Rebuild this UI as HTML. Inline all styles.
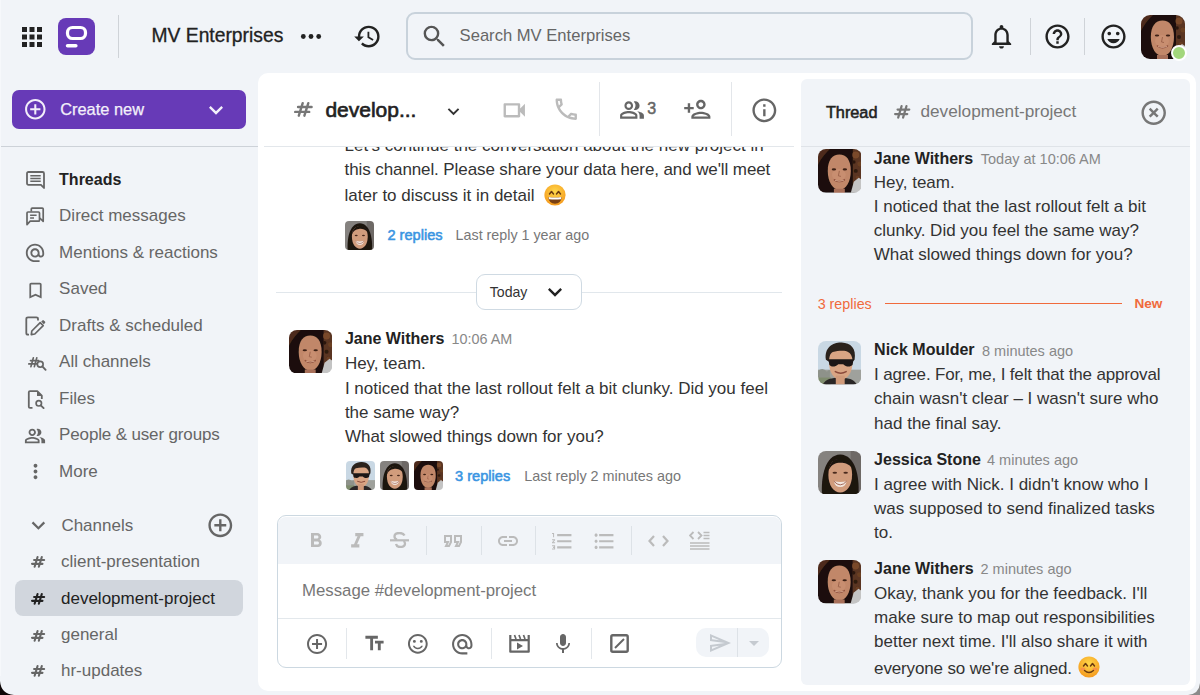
<!DOCTYPE html>
<html><head><meta charset="utf-8"><style>
html,body{margin:0;padding:0;}
body{width:1200px;height:695px;overflow:hidden;position:relative;background:#f1f4f8;font-family:"Liberation Sans",sans-serif;}
.t{position:absolute;white-space:nowrap;font-family:"Liberation Sans",sans-serif;}
svg{display:block}
</style></head><body>
<svg style="position:absolute;left:16.7px;top:21.7px;" width="30" height="30" viewBox="0 0 24 24"><path d="M4 8h4V4H4v4zm6 12h4v-4h-4v4zm-6 0h4v-4H4v4zm0-6h4v-4H4v4zm6 0h4v-4h-4v4zm6-10v4h4V4h-4zm-6 4h4V4h-4v4zm6 6h4v-4h-4v4zm0 6h4v-4h-4v4z" fill="#222"/></svg>
<svg style="position:absolute;left:58px;top:18px;" width="37" height="37" viewBox="0 0 37 37"><rect width="37" height="37" rx="8" fill="#673ab7"/><rect x="9.5" y="9.5" width="18" height="11" rx="5" fill="none" stroke="#fff" stroke-width="3.2"/><rect x="7.8" y="26" width="11.8" height="3.4" rx="1.7" fill="#fff"/></svg>
<div style="position:absolute;left:118px;top:15px;width:1px;height:43px;background:#cfd3d8"></div>
<div class="t" style="left:151.5px;top:26.16px;font-size:19.3px;line-height:19.3px;color:#222;font-weight:400;-webkit-text-stroke:0.3px #222">MV Enterprises</div>
<svg style="position:absolute;left:300px;top:32px;" width="22" height="9" viewBox="0 0 22 9"><circle cx="3.3" cy="4.5" r="2.4" fill="#222"/><circle cx="11" cy="4.5" r="2.4" fill="#222"/><circle cx="18.7" cy="4.5" r="2.4" fill="#222"/></svg>
<svg style="position:absolute;left:353.3px;top:22.0px;" width="29" height="29" viewBox="0 0 24 24"><path d="M13 3a9 9 0 0 0-9 9H1l3.89 3.89.07.14L9 12H6c0-3.87 3.13-7 7-7s7 3.13 7 7-3.13 7-7 7c-1.93 0-3.68-.79-4.94-2.06l-1.42 1.42A8.954 8.954 0 0 0 13 21a9 9 0 0 0 0-18zm-1 5v5l4.28 2.54.72-1.21-3.5-2.08V8H12z" fill="#222"/></svg>
<div style="position:absolute;left:406px;top:12px;width:563px;height:44px;border:2px solid #c8d2db;border-radius:9px;background:#f1f4f8"></div>
<svg style="position:absolute;left:420.2px;top:22px;" width="29" height="29" viewBox="0 0 24 24"><path d="M15.5 14h-.79l-.28-.27A6.471 6.471 0 0 0 16 9.5 6.5 6.5 0 1 0 9.5 16c1.61 0 3.09-.59 4.23-1.57l.27.28v.79l5 4.99L20.49 19l-4.99-5zm-6 0C7.01 14 5 11.99 5 9.5S7.01 5 9.5 5 14 7.01 14 9.5 11.99 14 9.5 14z" fill="#555"/></svg>
<div class="t" style="left:459.6px;top:27.75px;font-size:16.6px;line-height:16.6px;color:#666;font-weight:400;">Search MV Enterprises</div>
<svg style="position:absolute;left:986.8px;top:22px;" width="29" height="29" viewBox="0 0 24 24"><path d="M12 22c1.1 0 2-.9 2-2h-4c0 1.1.89 2 2 2zm6-6v-5c0-3.07-1.64-5.64-4.5-6.32V4c0-.83-.67-1.5-1.5-1.5s-1.5.67-1.5 1.5v.68C7.63 5.36 6 7.92 6 11v5l-2 2v1h16v-1l-2-2zm-2 1H8v-6c0-2.48 1.51-4.5 4-4.5s4 2.02 4 4.5v6z" fill="#222"/></svg>
<div style="position:absolute;left:1030px;top:18px;width:1px;height:37px;background:#cfd3d8"></div>
<svg style="position:absolute;left:1043.1px;top:21.6px;" width="29" height="29" viewBox="0 0 24 24"><path d="M11 18h2v-2h-2v2zm1-16C6.48 2 2 6.48 2 12s4.48 10 10 10 10-4.48 10-10S17.52 2 12 2zm0 18c-4.41 0-8-3.59-8-8s3.59-8 8-8 8 3.59 8 8-3.59 8-8 8zm0-14c-2.21 0-4 1.79-4 4h2c0-1.1.9-2 2-2s2 .9 2 2c0 2-3 1.75-3 5h2c0-2.25 3-2.5 3-5 0-2.21-1.79-4-4-4z" fill="#222"/></svg>
<div style="position:absolute;left:1084px;top:18px;width:1px;height:37px;background:#cfd3d8"></div>
<svg style="position:absolute;left:1099px;top:21.6px;" width="29" height="29" viewBox="0 0 24 24"><path d="M11.99 2C6.47 2 2 6.48 2 12s4.47 10 9.99 10C17.52 22 22 17.52 22 12S17.52 2 11.99 2zM12 20c-4.42 0-8-3.58-8-8s3.58-8 8-8 8 3.58 8 8-3.58 8-8 8zm3.5-9c.83 0 1.5-.67 1.5-1.5S16.33 8 15.5 8 14 8.67 14 9.5s.67 1.5 1.5 1.5zm-7 0c.83 0 1.5-.67 1.5-1.5S9.33 8 8.5 8 7 8.67 7 9.5 7.67 11 8.5 11zm3.5 6.5c2.33 0 4.31-1.46 5.11-3.5H6.89c.8 2.04 2.78 3.5 5.11 3.5z" fill="#222"/></svg>
<svg style="position:absolute;left:1141px;top:14.5px;" width="44" height="44" viewBox="0 0 44 44"> <defs><clipPath id="cj11410145"><rect width="44" height="44" rx="9.00"/></clipPath><filter id="fcj11410145" x="-10%" y="-10%" width="120%" height="120%"><feGaussianBlur stdDeviation="0.35"/></filter></defs>
<g clip-path="url(#cj11410145)"><g filter="url(#fcj11410145)">
<rect width="44" height="44" fill="#1a100c"/>
<rect x="35" y="0" width="9" height="36" fill="#5a3420"/>
<circle cx="38" cy="6" r="3.5" fill="#7a4a2c"/><circle cx="42" cy="15" r="2.5" fill="#6b3f24"/><circle cx="38" cy="22" r="2" fill="#2e1a10"/><circle cx="40" cy="29" r="2" fill="#6a3e24"/><circle cx="36" cy="13" r="1.8" fill="#2a170e"/>
<path d="M0 0 H12 C8 4 4 8 0 16 Z" fill="#4e2c1a"/>
<path d="M9.8 22 C9.8 11 14.5 5.5 21.5 5.5 C28.5 5.5 33 11 33 22 C33 33 28 41 21.5 41 C15 41 9.8 33 9.8 22 Z" fill="#c18769"/>
<ellipse cx="21" cy="26" rx="7" ry="6" fill="#c99072" opacity="0.8"/>
<ellipse cx="16" cy="20.5" rx="2.2" ry="1.1" fill="#3e2016"/><ellipse cx="27" cy="20.5" rx="2.2" ry="1.1" fill="#3e2016"/>
<path d="M21.5 22 L20.5 27 L23 27.5" stroke="#9a6048" stroke-width="0.9" fill="none"/>
<path d="M16.5 31 Q21.5 34.5 26.5 31" stroke="#8a4a38" stroke-width="1.5" fill="none" stroke-linecap="round"/>
<path d="M17 31.5 Q21.5 33.5 26 31.5" stroke="#e0b49a" stroke-width="0.8" fill="none"/>
<rect x="16" y="40" width="11" height="5" fill="#a8705a"/>
<path d="M36 33 L41 29 L44 31 L44 44 L33 44 Z" fill="#c4c4c4"/>
</g></g></svg>
<div style="position:absolute;left:1170.5px;top:44.5px;width:12px;height:12px;background:#a3d77c;border:2.2px solid #fff;border-radius:50%"></div>
<div style="position:absolute;left:12px;top:90px;width:234px;height:39px;background:#673ab7;border-radius:7px"></div>
<svg style="position:absolute;left:22.9px;top:96.9px;" width="24.6" height="24.6" viewBox="0 0 24 24"><path d="M13 7h-2v4H7v2h4v4h2v-4h4v-2h-4V7zm-1-5C6.48 2 2 6.48 2 12s4.48 10 10 10 10-4.48 10-10S17.52 2 12 2zm0 18c-4.41 0-8-3.59-8-8s3.59-8 8-8 8 3.59 8 8-3.59 8-8 8z" fill="#f2eefa"/></svg>
<div class="t" style="left:60.2px;top:100.82px;font-size:16.4px;line-height:16.4px;color:#f3f0fa;font-weight:400;-webkit-text-stroke:0.25px #f3f0fa">Create new</div>
<svg style="position:absolute;left:202px;top:96px;" width="28" height="28" viewBox="0 0 24 24"><path d="M16.59 8.59L12 13.17 7.41 8.59 6 10l6 6 6-6z" fill="#f3f0fa"/></svg>
<div style="position:absolute;left:0px;top:146px;width:258px;height:1px;background:#cdd2d8"></div>
<div class="t" style="left:59.1px;top:171.56px;font-size:16px;line-height:16px;color:#222;font-weight:700;">Threads</div>
<div class="t" style="left:59.1px;top:207.01px;font-size:17px;line-height:17px;color:#666;font-weight:400;">Direct messages</div>
<div class="t" style="left:59.1px;top:243.61px;font-size:17px;line-height:17px;color:#666;font-weight:400;">Mentions &amp; reactions</div>
<div class="t" style="left:59.1px;top:280.11px;font-size:17px;line-height:17px;color:#666;font-weight:400;">Saved</div>
<div class="t" style="left:59.1px;top:316.61px;font-size:17px;line-height:17px;color:#666;font-weight:400;">Drafts &amp; scheduled</div>
<div class="t" style="left:59.1px;top:353.11px;font-size:17px;line-height:17px;color:#666;font-weight:400;">All channels</div>
<div class="t" style="left:59.1px;top:389.61px;font-size:17px;line-height:17px;color:#666;font-weight:400;">Files</div>
<div class="t" style="left:59.1px;top:426.11px;font-size:17px;line-height:17px;color:#666;font-weight:400;letter-spacing:-0.15px">People &amp; user groups</div>
<div class="t" style="left:59.1px;top:462.61px;font-size:17px;line-height:17px;color:#666;font-weight:400;">More</div>
<svg style="position:absolute;left:26px;top:171px;" width="19" height="18" viewBox="0 0 19 18"><path d="M2.5 1 H16.5 Q18 1 18 2.5 V17 L15 13.8 H2.5 Q1 13.8 1 12.3 V2.5 Q1 1 2.5 1 Z" fill="none" stroke="#666" stroke-width="1.8" stroke-linejoin="round"/><path d="M4.3 4.8 H14.7 M4.3 7.5 H14.7 M4.3 10.2 H14.7" stroke="#666" stroke-width="1.5"/></svg>
<svg style="position:absolute;left:22px;top:202px;" width="28" height="28" viewBox="0 0 28 28"><path d="M9.3 9.6 V7 Q9.3 6.1 10.2 6.1 H20.3 Q21.2 6.1 21.2 7 V19.3 L17.8 16" fill="none" stroke="#666" stroke-width="1.7" stroke-linejoin="round"/><path d="M6 10 H16.5 Q17.5 10 17.5 11 V18.2 Q17.5 19.2 16.5 19.2 H8.2 L5 22.6 V11 Q5 10 6 10 Z" fill="none" stroke="#666" stroke-width="1.7" stroke-linejoin="round"/><path d="M8.1 13.3 H14.6 M8.1 16 H12" stroke="#666" stroke-width="1.5"/></svg>
<svg style="position:absolute;left:23.6px;top:242.2px;" width="22" height="22" viewBox="0 0 24 24"><path d="M12 1.95c-5.52 0-10 4.48-10 10s4.48 10 10 10h5v-2h-5c-4.34 0-8-3.660-8-8s3.66-8 8-8 8 3.66 8 8v1.43c0 .79-.71 1.57-1.5 1.57s-1.5-.78-1.5-1.57v-1.43c0-2.76-2.24-5-5-5s-5 2.24-5 5 2.24 5 5 5c1.38 0 2.64-.56 3.54-1.47.65.89 1.77 1.47 2.960 1.47 1.97 0 3.5-1.6 3.5-3.57v-1.43c0-5.52-4.48-10-10-10zm0 13c-1.66 0-3-1.34-3-3s1.34-3 3-3 3 1.34 3 3-1.34 3-3 3z" fill="#666"/></svg>
<svg style="position:absolute;left:25px;top:279.5px;" width="21" height="21" viewBox="0 0 24 24"><path d="M17 3H7c-1.1 0-1.99.9-1.99 2L5 21l7-3 7 3V5c0-1.1-.9-2-2-2zm0 15l-5-2.18L7 18V5h10v13z" fill="#666"/></svg>
<svg style="position:absolute;left:25px;top:316px;" width="21" height="20" viewBox="0 0 21 20"><path d="M13 4.5 V3 Q13 1.3 11.3 1.3 H3 Q1.3 1.3 1.3 3 V17 Q1.3 18.7 3 18.7 H4" fill="none" stroke="#666" stroke-width="1.8"/><path d="M6.3 18.6 L6.8 15 L15.2 6.6 L18.2 9.6 L9.8 18 Z" fill="none" stroke="#666" stroke-width="1.7" stroke-linejoin="round"/><path d="M16.2 5.6 L17.4 4.4 Q18.1 3.7 18.8 4.4 L20 5.6 Q20.7 6.3 20 7 L18.8 8.2 Z" fill="#666"/></svg>
<svg style="position:absolute;left:25.2px;top:353.5px;" width="17.5" height="16.5" viewBox="0 0 17.5 16.5"><path d="M8.32 3.85 L5.93 12.65 M11.75 3.85 L9.36 12.65 M5.52 6.53 L13.65 6.53 M3.85 9.97 L12.30 9.97" stroke="#666" stroke-width="1.7" stroke-linecap="round" fill="none"/></svg>
<svg style="position:absolute;left:36px;top:359px;" width="11" height="12" viewBox="0 0 11 12"><circle cx="4.2" cy="5.2" r="2.9" fill="none" stroke="#666" stroke-width="1.7"/><path d="M6.3 7.4 L9.6 10.8" stroke="#666" stroke-width="1.9" stroke-linecap="round"/></svg>
<svg style="position:absolute;left:27px;top:389.5px;" width="18" height="19" viewBox="0 0 18 19"><path d="M5.5 17.9 H3 Q1.8 17.9 1.8 16.7 V2.3 Q1.8 1.1 3 1.1 H10.3 L14.8 5.6 V9" fill="none" stroke="#666" stroke-width="1.8" stroke-linejoin="round"/><path d="M10 1.1 L14.8 5.9 H10 Z" fill="#666"/><circle cx="11.8" cy="13.3" r="2.7" fill="none" stroke="#666" stroke-width="1.7"/><path d="M13.8 15.3 L16.6 18.1" stroke="#666" stroke-width="1.9" stroke-linecap="round"/></svg>
<svg style="position:absolute;left:24.1px;top:425px;" width="22" height="22" viewBox="0 0 24 24"><path d="M16.67 13.13C18.04 14.06 19 15.32 19 17v3h4v-3c0-2.18-3.57-3.47-6.33-3.87zM15 12c2.21 0 4-1.79 4-4s-1.79-4-4-4c-.47 0-.91.1-1.33.24a5.98 5.98 0 0 1 0 7.52c.42.14.86.24 1.33.24zm-6 0c2.210 0 4-1.79 4-4s-1.79-4-4-4-4 1.79-4 4 1.79 4 4 4zm0-6c1.1 0 2 .9 2 2s-.9 2-2 2-2-.9-2-2 .9-2 2-2zm0 7c-2.67 0-8 1.34-8 4v3h16v-3c0-2.66-5.33-4-8-4zm6 5H3v-.99C3.2 16.29 6.3 15 9 15s5.8 1.29 6 2v1z" fill="#666"/></svg>
<svg style="position:absolute;left:23.5px;top:459.5px;" width="23" height="23" viewBox="0 0 24 24"><path d="M12 8c1.1 0 2-.9 2-2s-.9-2-2-2-2 .9-2 2 .9 2 2 2zm0 2c-1.1 0-2 .9-2 2s.9 2 2 2 2-.9 2-2-.9-2-2-2zm0 6c-1.1 0-2 .9-2 2s.9 2 2 2 2-.9 2-2-.9-2-2-2z" fill="#666"/></svg>
<svg style="position:absolute;left:24.6px;top:512.4px;" width="26.8" height="26.8" viewBox="0 0 24 24"><path d="M16.59 8.59L12 13.17 7.41 8.59 6 10l6 6 6-6z" fill="#666"/></svg>
<div class="t" style="left:61.4px;top:517.01px;font-size:17px;line-height:17px;color:#666;font-weight:400;">Channels</div>
<svg style="position:absolute;left:205.6px;top:511.3px;" width="28.6" height="28.6" viewBox="0 0 24 24"><path d="M13 7h-2v4H7v2h4v4h2v-4h4v-2h-4V7zm-1-5C6.48 2 2 6.48 2 12s4.48 10 10 10 10-4.48 10-10S17.52 2 12 2zm0 18c-4.41 0-8-3.59-8-8s3.59-8 8-8 8 3.59 8 8-3.59 8-8 8z" fill="#666"/></svg>
<div style="position:absolute;left:15px;top:580px;width:228px;height:36px;background:#d1d6dd;border-radius:8px"></div>
<div class="t" style="left:61px;top:552.61px;font-size:17px;line-height:17px;color:#666;font-weight:400;">client-presentation</div>
<svg style="position:absolute;left:27.6px;top:553px;" width="20.2" height="17.8" viewBox="0 0 20.2 17.8"><path d="M9.57 4.05 L6.62 13.75 M13.81 4.05 L10.85 13.75 M6.11 6.96 L16.15 6.96 M4.05 10.84 L14.49 10.84" stroke="#666" stroke-width="2.1" stroke-linecap="round" fill="none"/></svg>
<div class="t" style="left:61px;top:589.61px;font-size:17px;line-height:17px;color:#222;font-weight:400;">development-project</div>
<svg style="position:absolute;left:27.6px;top:590px;" width="20.2" height="17.8" viewBox="0 0 20.2 17.8"><path d="M9.57 4.05 L6.62 13.75 M13.81 4.05 L10.85 13.75 M6.11 6.96 L16.15 6.96 M4.05 10.84 L14.49 10.84" stroke="#222" stroke-width="2.1" stroke-linecap="round" fill="none"/></svg>
<div class="t" style="left:61px;top:626.41px;font-size:17px;line-height:17px;color:#666;font-weight:400;">general</div>
<svg style="position:absolute;left:27.6px;top:626.8px;" width="20.2" height="17.8" viewBox="0 0 20.2 17.8"><path d="M9.57 4.05 L6.62 13.75 M13.81 4.05 L10.85 13.75 M6.11 6.96 L16.15 6.96 M4.05 10.84 L14.49 10.84" stroke="#666" stroke-width="2.1" stroke-linecap="round" fill="none"/></svg>
<div class="t" style="left:61px;top:661.91px;font-size:17px;line-height:17px;color:#666;font-weight:400;">hr-updates</div>
<svg style="position:absolute;left:27.6px;top:662.3px;" width="20.2" height="17.8" viewBox="0 0 20.2 17.8"><path d="M9.57 4.05 L6.62 13.75 M13.81 4.05 L10.85 13.75 M6.11 6.96 L16.15 6.96 M4.05 10.84 L14.49 10.84" stroke="#666" stroke-width="2.1" stroke-linecap="round" fill="none"/></svg>
<div style="position:absolute;left:258px;top:73px;width:938px;height:618px;background:#fff;border-radius:10px"></div>
<div style="position:absolute;left:800.5px;top:79.3px;width:389.2px;height:605.4px;background:#f1f4f8;border-radius:6px"></div>
<div style="position:absolute;left:264px;top:146px;width:530px;height:1px;background:#e3e7eb"></div>
<div style="position:absolute;left:800.5px;top:146px;width:389.2px;height:1px;background:#dfe3e8"></div>
<svg style="position:absolute;left:290.6px;top:98.9px;" width="24.8" height="20.9" viewBox="0 0 24.8 20.9"><path d="M11.70 4.20 L7.79 16.70 M17.31 4.20 L13.40 16.70 M7.06 8.01 L20.60 8.01 M4.20 12.89 L18.21 12.89" stroke="#777" stroke-width="2.4" stroke-linecap="round" fill="none"/></svg>
<div class="t" style="left:325.4px;top:99.42px;font-size:21px;line-height:21px;color:#222;font-weight:400;-webkit-text-stroke:0.65px #222">develop...</div>
<svg style="position:absolute;left:441.5px;top:99.5px;" width="23" height="23" viewBox="0 0 24 24"><path d="M16.59 8.59L12 13.17 7.41 8.59 6 10l6 6 6-6z" fill="#333"/></svg>
<svg style="position:absolute;left:500.3px;top:95.8px;" width="28.5" height="28.5" viewBox="0 0 24 24"><path d="M17 10.5V7c0-.55-.45-1-1-1H4c-.55 0-1 .45-1 1v10c0 .55.45 1 1 1h12c.55 0 1-.45 1-1v-3.5l4 4v-11l-4 4zM15 16H5V8h10v8z" fill="#bbb"/></svg>
<svg style="position:absolute;left:551.7px;top:95.2px;" width="28.5" height="28.5" viewBox="0 0 24 24"><path d="M6.54 5c.06.89.21 1.76.45 2.59l-1.2 1.2c-.41-1.2-.67-2.47-.76-3.79h1.51m9.86 12.02c.85.24 1.72.39 2.6.45v1.49c-1.32-.09-2.59-.35-3.8-.75l1.2-1.19M7.5 3H4c-.55 0-1 .45-1 1 0 9.39 7.610 17 17 17 .55 0 1-.45 1-1v-3.49c0-.55-.45-1-1-1-1.24 0-2.450-.2-3.57-.57a.84.84 0 0 0-.31-.05c-.26 0-.51.1-.71.29l-2.2 2.2a15.149 15.149 0 0 1-6.59-6.59l2.2-2.2c.28-.28.36-.67.25-1.02A11.36 11.36 0 0 1 8.5 4c0-.55-.45-1-1-1z" fill="#bbb"/></svg>
<div style="position:absolute;left:599px;top:82px;width:1px;height:54px;background:#e3e6ea"></div>
<svg style="position:absolute;left:618.9px;top:97.4px;" width="26" height="26" viewBox="0 0 24 24"><path d="M16.67 13.13C18.04 14.06 19 15.32 19 17v3h4v-3c0-2.18-3.57-3.47-6.33-3.87zM15 12c2.21 0 4-1.79 4-4s-1.79-4-4-4c-.47 0-.91.1-1.33.24a5.98 5.98 0 0 1 0 7.52c.42.14.86.24 1.33.24zm-6 0c2.210 0 4-1.79 4-4s-1.79-4-4-4-4 1.79-4 4 1.79 4 4 4zm0-6c1.1 0 2 .9 2 2s-.9 2-2 2-2-.9-2-2 .9-2 2-2zm0 7c-2.67 0-8 1.34-8 4v3h16v-3c0-2.66-5.33-4-8-4zm6 5H3v-.99C3.2 16.29 6.3 15 9 15s5.8 1.29 6 2v1z" fill="#666"/></svg>
<div class="t" style="left:647.3px;top:101.26px;font-size:16px;line-height:16px;color:#666;font-weight:400;-webkit-text-stroke:0.5px #666">3</div>
<svg style="position:absolute;left:682.6px;top:95.2px;" width="28.6" height="28.6" viewBox="0 0 24 24"><path d="M15 12c2.21 0 4-1.79 4-4s-1.79-4-4-4-4 1.79-4 4 1.79 4 4 4zm0-6c1.1 0 2 .9 2 2s-.9 2-2 2-2-.9-2-2 .9-2 2-2zm0 8c-2.67 0-8 1.34-8 4v2h16v-2c0-2.66-5.33-4-8-4zm-6 4c.22-.72 3.31-2 6-2 2.7 0 5.8 1.29 6 2H9zm-3-3v-3h3v-2H6V7H4v3H1v2h3v3z" fill="#666"/></svg>
<div style="position:absolute;left:730.5px;top:82px;width:1px;height:54px;background:#e3e6ea"></div>
<svg style="position:absolute;left:749.6px;top:95.6px;" width="28.7" height="28.7" viewBox="0 0 24 24"><path d="M11 7h2v2h-2zm0 4h2v6h-2zm1-9C6.48 2 2 6.48 2 12s4.48 10 10 10 10-4.48 10-10S17.52 2 12 2zm0 18c-4.41 0-8-3.59-8-8s3.59-8 8-8 8 3.59 8 8-3.59 8-8 8z" fill="#666"/></svg>
<div class="t" style="left:825.9px;top:103.90px;font-size:16.3px;line-height:16.3px;color:#222;font-weight:400;-webkit-text-stroke:0.55px #222">Thread</div>
<svg style="position:absolute;left:891.4px;top:102.4px;" width="22.4" height="19.7" viewBox="0 0 22.4 19.7"><path d="M10.59 4.10 L7.18 15.60 M15.48 4.10 L12.07 15.60 M6.56 7.60 L18.30 7.60 M4.10 12.10 L16.27 12.10" stroke="#777" stroke-width="2.2" stroke-linecap="round" fill="none"/></svg>
<div class="t" style="left:920.5px;top:103.14px;font-size:17.2px;line-height:17.2px;color:#777;font-weight:400;">development-project</div>
<svg style="position:absolute;left:1138.5px;top:98px;" width="29.4" height="29.4" viewBox="0 0 24 24"><path d="M14.59 8L12 10.59 9.41 8 8 9.41 10.59 12 8 14.59 9.41 16 12 13.41 14.59 16 16 14.59 13.41 12 16 9.41 14.59 8zM12 2C6.47 2 2 6.47 2 12s4.47 10 10 10 10-4.47 10-10S17.53 2 12 2zm0 18c-4.41 0-8-3.59-8-8s3.59-8 8-8 8 3.59 8 8-3.59 8-8 8z" fill="#777"/></svg>
<div style="position:absolute;left:258px;top:147px;width:542px;height:30px;overflow:hidden">
<div class="t" style="left:86.60000000000002px;top:-10.39px;font-size:17px;line-height:17px;color:#333;font-weight:400;">Let's continue the conversation about the new project in</div>
</div>
<div class="t" style="left:344.6px;top:161.11px;font-size:17px;line-height:17px;color:#333;font-weight:400;letter-spacing:-0.1px">this channel. Please share your data here, and we'll meet</div>
<div class="t" style="left:344.6px;top:186.81px;font-size:17px;line-height:17px;color:#333;font-weight:400;">later to discuss it in detail</div>
<svg style="position:absolute;left:543.8px;top:183.9px;" width="22" height="22" viewBox="0 0 22 22">
<defs><radialGradient id="eg1" cx="50%" cy="35%" r="65%"><stop offset="0" stop-color="#ffd84a"/><stop offset="1" stop-color="#f59a1e"/></radialGradient></defs>
<circle cx="11" cy="11" r="10.6" fill="url(#eg1)"/>
<path d="M5.5 10 L7.5 7.5 L9.5 10 M12.5 10 L14.5 7.5 L16.5 10" stroke="#6b3b10" stroke-width="1.5" fill="none" stroke-linecap="round" stroke-linejoin="round"/>
<path d="M4.2 13 Q11 14 17.8 13 Q17 19.5 11 19.8 Q5 19.5 4.2 13Z" fill="#7a4012"/>
<path d="M4.6 13.1 Q11 14.1 17.4 13.1 L17 15.2 Q11 16 5 15.2Z" fill="#fff"/>
</svg>
<svg style="position:absolute;left:345.3px;top:221px;" width="29" height="29" viewBox="0 0 44 44"> <defs><clipPath id="cs34532210"><rect width="44" height="44" rx="6.07"/></clipPath><filter id="fcs34532210" x="-10%" y="-10%" width="120%" height="120%"><feGaussianBlur stdDeviation="0.53"/></filter></defs>
<g clip-path="url(#cs34532210)"><g filter="url(#fcs34532210)">
<rect width="44" height="44" fill="#85827f"/>
<rect x="33" width="11" height="44" fill="#6e6966"/>
<path d="M4 44 C3 26 7 4 22.5 3.5 C38 4 42 26 41 44 Z" fill="#1d1411"/>
<path d="M10.5 24 C10.5 13 15.5 8 22.5 8 C29.5 8 34.5 13 34.5 24 C34.5 35 29 42 22.5 42 C16 42 10.5 35 10.5 24 Z" fill="#d19c7c"/>
<path d="M10.5 20 C12 11 17 7.5 23 7.5 C29 7.5 33 10 34.5 17 C30 12 25 11.5 21 12 C16 12.5 13 15 10.5 20Z" fill="#1d1411"/>
<ellipse cx="17" cy="22" rx="2.3" ry="1" fill="#4a2a1e"/><ellipse cx="28" cy="22" rx="2.3" ry="1" fill="#4a2a1e"/>
<path d="M16 30.5 Q22.5 32 29 30.5 Q27.5 36.5 22.5 36.5 Q17.5 36.5 16 30.5Z" fill="#f2e6de"/>
<path d="M16 30.5 Q22.5 38 29 30.5" stroke="#9a5a48" stroke-width="0.9" fill="none"/>
</g></g></svg>
<div class="t" style="left:387.4px;top:228.24px;font-size:14.6px;line-height:14.6px;color:#3a95e2;font-weight:400;-webkit-text-stroke:0.55px #3a95e2">2 replies</div>
<div class="t" style="left:455.6px;top:227.90px;font-size:14.3px;line-height:14.3px;color:#777;font-weight:400;">Last reply 1 year ago</div>
<div style="position:absolute;left:276px;top:292px;width:506px;height:1px;background:#e1e7ec"></div>
<div style="position:absolute;left:476px;top:274px;width:104px;height:34px;border:1px solid #cfdae3;border-radius:9px;background:#fff"></div>
<div class="t" style="left:489.75px;top:285.16px;font-size:14.1px;line-height:14.1px;color:#333;font-weight:400;">Today</div>
<svg style="position:absolute;left:541px;top:278px;" width="28" height="28" viewBox="0 0 24 24"><path d="M16.59 8.59L12 13.17 7.41 8.59 6 10l6 6 6-6z" fill="#222"/></svg>
<svg style="position:absolute;left:288.9px;top:329.8px;" width="43.5" height="43.5" viewBox="0 0 44 44"> <defs><clipPath id="cj28893298"><rect width="44" height="44" rx="8.09"/></clipPath><filter id="fcj28893298" x="-10%" y="-10%" width="120%" height="120%"><feGaussianBlur stdDeviation="0.35"/></filter></defs>
<g clip-path="url(#cj28893298)"><g filter="url(#fcj28893298)">
<rect width="44" height="44" fill="#1a100c"/>
<rect x="35" y="0" width="9" height="36" fill="#5a3420"/>
<circle cx="38" cy="6" r="3.5" fill="#7a4a2c"/><circle cx="42" cy="15" r="2.5" fill="#6b3f24"/><circle cx="38" cy="22" r="2" fill="#2e1a10"/><circle cx="40" cy="29" r="2" fill="#6a3e24"/><circle cx="36" cy="13" r="1.8" fill="#2a170e"/>
<path d="M0 0 H12 C8 4 4 8 0 16 Z" fill="#4e2c1a"/>
<path d="M9.8 22 C9.8 11 14.5 5.5 21.5 5.5 C28.5 5.5 33 11 33 22 C33 33 28 41 21.5 41 C15 41 9.8 33 9.8 22 Z" fill="#c18769"/>
<ellipse cx="21" cy="26" rx="7" ry="6" fill="#c99072" opacity="0.8"/>
<ellipse cx="16" cy="20.5" rx="2.2" ry="1.1" fill="#3e2016"/><ellipse cx="27" cy="20.5" rx="2.2" ry="1.1" fill="#3e2016"/>
<path d="M21.5 22 L20.5 27 L23 27.5" stroke="#9a6048" stroke-width="0.9" fill="none"/>
<path d="M16.5 31 Q21.5 34.5 26.5 31" stroke="#8a4a38" stroke-width="1.5" fill="none" stroke-linecap="round"/>
<path d="M17 31.5 Q21.5 33.5 26 31.5" stroke="#e0b49a" stroke-width="0.8" fill="none"/>
<rect x="16" y="40" width="11" height="5" fill="#a8705a"/>
<path d="M36 33 L41 29 L44 31 L44 44 L33 44 Z" fill="#c4c4c4"/>
</g></g></svg>
<div class="t" style="left:344.9px;top:331.46px;font-size:16px;line-height:16px;color:#222;font-weight:700;">Jane Withers</div>
<div class="t" style="left:451.5px;top:332.31px;font-size:14.4px;line-height:14.4px;color:#888;font-weight:400;">10:06 AM</div>
<div class="t" style="left:344.9px;top:355.31px;font-size:17px;line-height:17px;color:#333;font-weight:400;">Hey, team.</div>
<div class="t" style="left:344.9px;top:379.81px;font-size:17px;line-height:17px;color:#333;font-weight:400;">I noticed that the last rollout felt a bit clunky. Did you feel</div>
<div class="t" style="left:344.9px;top:404.11px;font-size:17px;line-height:17px;color:#333;font-weight:400;">the same way?</div>
<div class="t" style="left:344.9px;top:428.41px;font-size:17px;line-height:17px;color:#333;font-weight:400;">What slowed things down for you?</div>
<svg style="position:absolute;left:345.6px;top:460.5px;" width="29" height="29" viewBox="0 0 44 44"> <defs><clipPath id="cn34564605"><rect width="44" height="44" rx="6.07"/></clipPath><filter id="fcn34564605" x="-10%" y="-10%" width="120%" height="120%"><feGaussianBlur stdDeviation="0.53"/></filter></defs>
<g clip-path="url(#cn34564605)"><g filter="url(#fcn34564605)">
<rect width="44" height="44" fill="#c9d8e4"/>
<rect y="29" width="44" height="15" fill="#9fa19c"/>
<path d="M0 30 Q5 26 9 31 Q13 27 12 33 L12 44 H0Z" fill="#8e928a"/>
<rect y="37" width="13" height="7" fill="#7f8c6e"/>
<path d="M5 44 C7 39 14 37 22 37 C30 37 37 39 39 44Z" fill="#2b2726"/>
<path d="M11 20 C11 11 16 7 23 7 C30 7 35 11 35 20 C35 32 30 39 23 39 C16 39 11 32 11 20Z" fill="#d9a584"/>
<rect x="18" y="35" width="9" height="9" fill="#d09a7a"/>
<path d="M8 19 C6 6 16 1 24 1.5 C33 2 39 7 37 19 L35 21 C35 14 32 11 28 10 C24 9.5 19 10 15 11 C12.5 12 11.5 15 11 21 Z" fill="#2b211c"/>
<path d="M10.5 18.5 H36 L35 24 C33 26.5 28.5 26.5 25.5 23.5 L20.5 23.5 C17.5 26.5 13 26.5 11.5 24 Z" fill="#1a1716"/>
<path d="M17.5 31 Q23 34 28.5 31" stroke="#8a4a3a" stroke-width="1.5" fill="none" stroke-linecap="round"/>
</g></g></svg>
<svg style="position:absolute;left:379.7px;top:460.5px;" width="29" height="29" viewBox="0 0 44 44"> <defs><clipPath id="cs37974605"><rect width="44" height="44" rx="6.07"/></clipPath><filter id="fcs37974605" x="-10%" y="-10%" width="120%" height="120%"><feGaussianBlur stdDeviation="0.53"/></filter></defs>
<g clip-path="url(#cs37974605)"><g filter="url(#fcs37974605)">
<rect width="44" height="44" fill="#85827f"/>
<rect x="33" width="11" height="44" fill="#6e6966"/>
<path d="M4 44 C3 26 7 4 22.5 3.5 C38 4 42 26 41 44 Z" fill="#1d1411"/>
<path d="M10.5 24 C10.5 13 15.5 8 22.5 8 C29.5 8 34.5 13 34.5 24 C34.5 35 29 42 22.5 42 C16 42 10.5 35 10.5 24 Z" fill="#d19c7c"/>
<path d="M10.5 20 C12 11 17 7.5 23 7.5 C29 7.5 33 10 34.5 17 C30 12 25 11.5 21 12 C16 12.5 13 15 10.5 20Z" fill="#1d1411"/>
<ellipse cx="17" cy="22" rx="2.3" ry="1" fill="#4a2a1e"/><ellipse cx="28" cy="22" rx="2.3" ry="1" fill="#4a2a1e"/>
<path d="M16 30.5 Q22.5 32 29 30.5 Q27.5 36.5 22.5 36.5 Q17.5 36.5 16 30.5Z" fill="#f2e6de"/>
<path d="M16 30.5 Q22.5 38 29 30.5" stroke="#9a5a48" stroke-width="0.9" fill="none"/>
</g></g></svg>
<svg style="position:absolute;left:413.5px;top:460.5px;" width="29" height="29" viewBox="0 0 44 44"> <defs><clipPath id="cj41354605"><rect width="44" height="44" rx="6.07"/></clipPath><filter id="fcj41354605" x="-10%" y="-10%" width="120%" height="120%"><feGaussianBlur stdDeviation="0.53"/></filter></defs>
<g clip-path="url(#cj41354605)"><g filter="url(#fcj41354605)">
<rect width="44" height="44" fill="#1a100c"/>
<rect x="35" y="0" width="9" height="36" fill="#5a3420"/>
<circle cx="38" cy="6" r="3.5" fill="#7a4a2c"/><circle cx="42" cy="15" r="2.5" fill="#6b3f24"/><circle cx="38" cy="22" r="2" fill="#2e1a10"/><circle cx="40" cy="29" r="2" fill="#6a3e24"/><circle cx="36" cy="13" r="1.8" fill="#2a170e"/>
<path d="M0 0 H12 C8 4 4 8 0 16 Z" fill="#4e2c1a"/>
<path d="M9.8 22 C9.8 11 14.5 5.5 21.5 5.5 C28.5 5.5 33 11 33 22 C33 33 28 41 21.5 41 C15 41 9.8 33 9.8 22 Z" fill="#c18769"/>
<ellipse cx="21" cy="26" rx="7" ry="6" fill="#c99072" opacity="0.8"/>
<ellipse cx="16" cy="20.5" rx="2.2" ry="1.1" fill="#3e2016"/><ellipse cx="27" cy="20.5" rx="2.2" ry="1.1" fill="#3e2016"/>
<path d="M21.5 22 L20.5 27 L23 27.5" stroke="#9a6048" stroke-width="0.9" fill="none"/>
<path d="M16.5 31 Q21.5 34.5 26.5 31" stroke="#8a4a38" stroke-width="1.5" fill="none" stroke-linecap="round"/>
<path d="M17 31.5 Q21.5 33.5 26 31.5" stroke="#e0b49a" stroke-width="0.8" fill="none"/>
<rect x="16" y="40" width="11" height="5" fill="#a8705a"/>
<path d="M36 33 L41 29 L44 31 L44 44 L33 44 Z" fill="#c4c4c4"/>
</g></g></svg>
<div class="t" style="left:455.1px;top:468.94px;font-size:14.6px;line-height:14.6px;color:#3a95e2;font-weight:400;-webkit-text-stroke:0.55px #3a95e2">3 replies</div>
<div class="t" style="left:524.2px;top:468.61px;font-size:14.4px;line-height:14.4px;color:#777;font-weight:400;">Last reply 2 minutes ago</div>
<div style="position:absolute;left:276.5px;top:515.2px;width:503.8px;height:151.3px;border:1.6px solid #ccd8e1;border-radius:9px;background:#fff;overflow:hidden"></div>
<div style="position:absolute;left:278px;top:516.7px;width:502.8px;height:47.5px;background:#f1f4f8;border-radius:8px 8px 0 0"></div>
<div style="position:absolute;left:278px;top:618px;width:502.8px;height:1px;background:#e3e8ec"></div>
<svg style="position:absolute;left:303.7px;top:529.2px;" width="24" height="24" viewBox="0 0 24 24"><path d="M15.6 10.79c.97-.67 1.65-1.77 1.65-2.79 0-2.26-1.75-4-4-4H7v14h7.04c2.09 0 3.71-1.7 3.71-3.79 0-1.52-.86-2.82-2.15-3.42zM10 6.5h3c.83 0 1.5.67 1.5 1.5s-.67 1.5-1.5 1.5h-3v-3zm3.5 9H10v-3h3.5c.83 0 1.5.67 1.5 1.5s-.67 1.5-1.5 1.5z" fill="#bbb"/></svg>
<svg style="position:absolute;left:345.2px;top:529px;" width="24.6" height="24.6" viewBox="0 0 24 24"><path d="M10 4v3h2.21l-3.42 8H6v3h8v-3h-2.21l3.42-8H18V4z" fill="#bbb"/></svg>
<svg style="position:absolute;left:389.5px;top:531.5px;" width="19" height="16" viewBox="0 0 19 16"><path d="M14.5 3.5 C13.5 1.5 11.5 1 9.5 1 C6.5 1 4.5 2.5 4.5 4.5 C4.5 6 5.5 7 7 7.5 M6 12 C6.5 14 8 15 10 15 C13 15 15 13.5 15 11.5 C15 10.5 14.5 9.5 13.5 9" fill="none" stroke="#bbb" stroke-width="2.3"/><path d="M0 8.3 H19" stroke="#bbb" stroke-width="2.2"/></svg>
<div style="position:absolute;left:426px;top:526px;width:1px;height:29px;background:#dde2e7"></div>
<svg style="position:absolute;left:441.4px;top:529.3px;" width="24" height="24" viewBox="0 0 24 24"><path d="M18.62 18h-5.24l2-4H13V6h8v7.24L18.62 18zm-2-2h.76L19 12.76V8h-4v4h3.62l-2 4zm-8 2H3.38l2-4H3V6h8v7.24L8.62 18zm-2-2h.76L9 12.76V8H5v4h3.62l-2 4z" fill="#bbb"/></svg>
<div style="position:absolute;left:480.5px;top:526px;width:1px;height:29px;background:#dde2e7"></div>
<svg style="position:absolute;left:495.5px;top:529px;" width="24" height="24" viewBox="0 0 24 24"><path d="M3.9 12c0-1.71 1.39-3.1 3.1-3.1h4V7H7c-2.76 0-5 2.24-5 5s2.24 5 5 5h4v-1.9H7c-1.71 0-3.1-1.39-3.1-3.1zM8 13h8v-2H8v2zm9-6h-4v1.9h4c1.71 0 3.1 1.39 3.1 3.1s-1.39 3.1-3.1 3.1h-4V17h4c2.76 0 5-2.24 5-5s-2.24-5-5-5z" fill="#bbb"/></svg>
<div style="position:absolute;left:535px;top:526px;width:1px;height:29px;background:#dde2e7"></div>
<svg style="position:absolute;left:549.9px;top:528.6px;" width="24.5" height="24.5" viewBox="0 0 24 24"><path d="M2 17h2v.5H3v1h1v.5H2v1h3v-4H2v1zm1-9h1V4H2v1h1v3zm-1 3h1.8L2 13.1v.9h3v-1H3.2L5 10.9V10H2v1zm5-6v2h14V5H7zm0 14h14v-2H7v2zm0-6h14v-2H7v2z" fill="#bbb"/></svg>
<svg style="position:absolute;left:591.75px;top:528.5px;" width="24.5" height="24.5" viewBox="0 0 24 24"><path d="M4 10.5c-.83 0-1.5.67-1.5 1.5s.67 1.5 1.5 1.5 1.5-.67 1.5-1.5-.67-1.5-1.5-1.5zm0-6c-.83 0-1.5.67-1.5 1.5S3.17 7.5 4 7.5 5.5 6.83 5.5 6 4.83 4.5 4 4.5zm0 12c-.83 0-1.5.68-1.5 1.5s.68 1.5 1.5 1.5 1.5-.68 1.5-1.5-.67-1.5-1.5-1.5zM7 19h14v-2H7v2zm0-6h14v-2H7v2zm0-8v2h14V5H7z" fill="#bbb"/></svg>
<div style="position:absolute;left:631px;top:526px;width:1px;height:29px;background:#dde2e7"></div>
<svg style="position:absolute;left:648px;top:535px;" width="21" height="12" viewBox="0 0 21 12"><path d="M6 1 L1.5 6 L6 11 M15 1 L19.5 6 L15 11" fill="none" stroke="#bbb" stroke-width="2.2"/></svg>
<svg style="position:absolute;left:689px;top:531px;" width="21" height="19" viewBox="0 0 21 19"><path d="M4.5 1 L1 4.5 L4.5 8 M9 1 L12.5 4.5 L9 8" fill="none" stroke="#bbb" stroke-width="1.8"/><path d="M14.5 1.5 H20.5 M14.5 4.5 H20.5 M14.5 7.5 H20.5 M1 12 H20.5 M1 15 H20.5 M1 18 H20.5" stroke="#bbb" stroke-width="1.6"/></svg>
<div class="t" style="left:302px;top:583.08px;font-size:16.8px;line-height:16.8px;color:#777;font-weight:400;">Message #development-project</div>
<svg style="position:absolute;left:305.3px;top:632.3px;" width="24.1" height="24.1" viewBox="0 0 24 24"><path d="M13 7h-2v4H7v2h4v4h2v-4h4v-2h-4V7zm-1-5C6.48 2 2 6.48 2 12s4.48 10 10 10 10-4.48 10-10S17.52 2 12 2zm0 18c-4.41 0-8-3.59-8-8s3.59-8 8-8 8 3.59 8 8-3.59 8-8 8z" fill="#666"/></svg>
<div style="position:absolute;left:345.5px;top:628px;width:1px;height:31px;background:#e3e7eb"></div>
<svg style="position:absolute;left:362.7px;top:632px;" width="23" height="23" viewBox="0 0 24 24"><path d="M2.5 4v3h5v12h3V7h5V4h-13zm19 5h-9v3h3v7h3v-7h3V9z" fill="#666"/></svg>
<svg style="position:absolute;left:406px;top:632.3px;" width="23.7" height="23.7" viewBox="0 0 24 24"><path d="M8.5 8A1.5 1.5 0 1 0 8.5 11 1.5 1.5 0 1 0 8.5 8zM15.5 8A1.5 1.5 0 1 0 15.5 11 1.5 1.5 0 1 0 15.5 8zM12 16c-1.48 0-2.75-.81-3.45-2H6.88c.8 2.05 2.79 3.5 5.12 3.5s4.32-1.45 5.12-3.5h-1.67c-.7 1.19-1.97 2-3.45 2zm-.01-14C6.47 2 2 6.48 2 12s4.47 10 9.99 10C17.52 22 22 17.52 22 12S17.52 2 11.99 2zM12 20c-4.42 0-8-3.58-8-8s3.58-8 8-8 8 3.58 8 8-3.58 8-8 8z" fill="#666"/></svg>
<svg style="position:absolute;left:449.6px;top:632.3px;" width="24.5" height="24.5" viewBox="0 0 24 24"><path d="M12 1.95c-5.52 0-10 4.48-10 10s4.48 10 10 10h5v-2h-5c-4.34 0-8-3.660-8-8s3.66-8 8-8 8 3.66 8 8v1.43c0 .79-.71 1.57-1.5 1.57s-1.5-.78-1.5-1.57v-1.43c0-2.76-2.24-5-5-5s-5 2.24-5 5 2.24 5 5 5c1.38 0 2.64-.56 3.54-1.47.65.89 1.77 1.47 2.960 1.47 1.97 0 3.5-1.6 3.5-3.57v-1.43c0-5.52-4.48-10-10-10zm0 13c-1.66 0-3-1.34-3-3s1.34-3 3-3 3 1.34 3 3-1.34 3-3 3z" fill="#666"/></svg>
<div style="position:absolute;left:490.5px;top:628px;width:1px;height:31px;background:#e3e7eb"></div>
<svg style="position:absolute;left:508.5px;top:634px;" width="21" height="19" viewBox="0 0 21 19"><path d="M1.3 1 V17.7 H19.7 V1 M1.3 6.2 H19.7" fill="none" stroke="#666" stroke-width="2.2" stroke-linejoin="round"/><path d="M5.5 1 L7 5 M10 1 L11.5 5 M14.5 1 L16 5" stroke="#666" stroke-width="1.7"/><path d="M8 8.5 L14 12 L8 15.5 Z" fill="#666"/></svg>
<svg style="position:absolute;left:550.5px;top:631.75px;" width="24" height="24" viewBox="0 0 24 24"><path d="M12 14c1.66 0 2.99-1.34 2.99-3L15 5c0-1.66-1.34-3-3-3S9 3.34 9 5v6c0 1.66 1.34 3 3 3zm5.3-3c0 3-2.54 5.1-5.3 5.1S6.7 14 6.7 11H5c0 3.41 2.72 6.23 6 6.72V21h2v-3.28c3.28-.48 6-3.3 6-6.72h-1.7z" fill="#666"/></svg>
<div style="position:absolute;left:591px;top:628px;width:1px;height:31px;background:#e3e7eb"></div>
<svg style="position:absolute;left:610px;top:634px;" width="19" height="19" viewBox="0 0 19 19"><rect x="1.3" y="1.3" width="16.4" height="16.4" rx="1.5" fill="none" stroke="#666" stroke-width="2.4"/><path d="M5 14 L14 5" stroke="#666" stroke-width="2"/></svg>
<div style="position:absolute;left:696.25px;top:628px;width:72.5px;height:28.75px;background:#f1f4f8;border-radius:10px"></div>
<svg style="position:absolute;left:708px;top:630.75px;" width="24" height="24" viewBox="0 0 24 24"><path d="M4.01 6.03l7.51 3.22-7.52-1 .01-2.22m7.5 8.72L4 17.970v-2.22l7.51-1M2.01 3L2 10l15 2-15 2 .01 7L23 12 2.01 3z" fill="#c5cad0"/></svg>
<div style="position:absolute;left:737px;top:628px;width:1px;height:28.75px;background:#dde2e7"></div>
<svg style="position:absolute;left:748.5px;top:640.5px;" width="10" height="5" viewBox="0 0 10 5"><path d="M0 0 H10 L5 5 Z" fill="#c5cad0"/></svg>
<svg style="position:absolute;left:817.5px;top:148.75px;" width="43.75" height="43.75" viewBox="0 0 44 44"> <defs><clipPath id="cj81751487"><rect width="44" height="44" rx="8.05"/></clipPath><filter id="fcj81751487" x="-10%" y="-10%" width="120%" height="120%"><feGaussianBlur stdDeviation="0.35"/></filter></defs>
<g clip-path="url(#cj81751487)"><g filter="url(#fcj81751487)">
<rect width="44" height="44" fill="#1a100c"/>
<rect x="35" y="0" width="9" height="36" fill="#5a3420"/>
<circle cx="38" cy="6" r="3.5" fill="#7a4a2c"/><circle cx="42" cy="15" r="2.5" fill="#6b3f24"/><circle cx="38" cy="22" r="2" fill="#2e1a10"/><circle cx="40" cy="29" r="2" fill="#6a3e24"/><circle cx="36" cy="13" r="1.8" fill="#2a170e"/>
<path d="M0 0 H12 C8 4 4 8 0 16 Z" fill="#4e2c1a"/>
<path d="M9.8 22 C9.8 11 14.5 5.5 21.5 5.5 C28.5 5.5 33 11 33 22 C33 33 28 41 21.5 41 C15 41 9.8 33 9.8 22 Z" fill="#c18769"/>
<ellipse cx="21" cy="26" rx="7" ry="6" fill="#c99072" opacity="0.8"/>
<ellipse cx="16" cy="20.5" rx="2.2" ry="1.1" fill="#3e2016"/><ellipse cx="27" cy="20.5" rx="2.2" ry="1.1" fill="#3e2016"/>
<path d="M21.5 22 L20.5 27 L23 27.5" stroke="#9a6048" stroke-width="0.9" fill="none"/>
<path d="M16.5 31 Q21.5 34.5 26.5 31" stroke="#8a4a38" stroke-width="1.5" fill="none" stroke-linecap="round"/>
<path d="M17 31.5 Q21.5 33.5 26 31.5" stroke="#e0b49a" stroke-width="0.8" fill="none"/>
<rect x="16" y="40" width="11" height="5" fill="#a8705a"/>
<path d="M36 33 L41 29 L44 31 L44 44 L33 44 Z" fill="#c4c4c4"/>
</g></g></svg>
<div class="t" style="left:873.75px;top:150.71px;font-size:16px;line-height:16px;color:#222;font-weight:700;">Jane Withers</div>
<div class="t" style="left:980.75px;top:151.98px;font-size:14.5px;line-height:14.5px;color:#888;font-weight:400;">Today at 10:06 AM</div>
<div class="t" style="left:873.75px;top:174.36px;font-size:17px;line-height:17px;color:#333;font-weight:400;">Hey, team.</div>
<div class="t" style="left:873.75px;top:198.11px;font-size:17px;line-height:17px;color:#333;font-weight:400;">I noticed that the last rollout felt a bit</div>
<div class="t" style="left:873.75px;top:221.86px;font-size:17px;line-height:17px;color:#333;font-weight:400;">clunky. Did you feel the same way?</div>
<div class="t" style="left:873.75px;top:246.11px;font-size:17px;line-height:17px;color:#333;font-weight:400;">What slowed things down for you?</div>
<div class="t" style="left:817.7px;top:296.90px;font-size:14.3px;line-height:14.3px;color:#f06a3c;font-weight:400;">3 replies</div>
<div style="position:absolute;left:885px;top:302.8px;width:237px;height:1.5px;background:#f06a3c"></div>
<div class="t" style="left:1134.4px;top:297.49px;font-size:13.6px;line-height:13.6px;color:#f06a3c;font-weight:700;">New</div>
<svg style="position:absolute;left:817.7px;top:341.2px;" width="43.5" height="43.5" viewBox="0 0 44 44"> <defs><clipPath id="cn81773412"><rect width="44" height="44" rx="8.09"/></clipPath><filter id="fcn81773412" x="-10%" y="-10%" width="120%" height="120%"><feGaussianBlur stdDeviation="0.35"/></filter></defs>
<g clip-path="url(#cn81773412)"><g filter="url(#fcn81773412)">
<rect width="44" height="44" fill="#c9d8e4"/>
<rect y="29" width="44" height="15" fill="#9fa19c"/>
<path d="M0 30 Q5 26 9 31 Q13 27 12 33 L12 44 H0Z" fill="#8e928a"/>
<rect y="37" width="13" height="7" fill="#7f8c6e"/>
<path d="M5 44 C7 39 14 37 22 37 C30 37 37 39 39 44Z" fill="#2b2726"/>
<path d="M11 20 C11 11 16 7 23 7 C30 7 35 11 35 20 C35 32 30 39 23 39 C16 39 11 32 11 20Z" fill="#d9a584"/>
<rect x="18" y="35" width="9" height="9" fill="#d09a7a"/>
<path d="M8 19 C6 6 16 1 24 1.5 C33 2 39 7 37 19 L35 21 C35 14 32 11 28 10 C24 9.5 19 10 15 11 C12.5 12 11.5 15 11 21 Z" fill="#2b211c"/>
<path d="M10.5 18.5 H36 L35 24 C33 26.5 28.5 26.5 25.5 23.5 L20.5 23.5 C17.5 26.5 13 26.5 11.5 24 Z" fill="#1a1716"/>
<path d="M17.5 31 Q23 34 28.5 31" stroke="#8a4a3a" stroke-width="1.5" fill="none" stroke-linecap="round"/>
</g></g></svg>
<div class="t" style="left:874.1px;top:342.46px;font-size:16px;line-height:16px;color:#222;font-weight:700;">Nick Moulder</div>
<div class="t" style="left:982px;top:343.73px;font-size:14.5px;line-height:14.5px;color:#888;font-weight:400;">8 minutes ago</div>
<div class="t" style="left:874.1px;top:366.21px;font-size:17px;line-height:17px;color:#333;font-weight:400;letter-spacing:-0.16px">I agree. For, me, I felt that the approval</div>
<div class="t" style="left:874.1px;top:390.01px;font-size:17px;line-height:17px;color:#333;font-weight:400;letter-spacing:0px">chain wasn't clear – I wasn't sure who</div>
<div class="t" style="left:874.1px;top:414.61px;font-size:17px;line-height:17px;color:#333;font-weight:400;letter-spacing:0px">had the final say.</div>
<svg style="position:absolute;left:817.7px;top:450.8px;" width="43.5" height="43.5" viewBox="0 0 44 44"> <defs><clipPath id="cs81774508"><rect width="44" height="44" rx="8.09"/></clipPath><filter id="fcs81774508" x="-10%" y="-10%" width="120%" height="120%"><feGaussianBlur stdDeviation="0.35"/></filter></defs>
<g clip-path="url(#cs81774508)"><g filter="url(#fcs81774508)">
<rect width="44" height="44" fill="#85827f"/>
<rect x="33" width="11" height="44" fill="#6e6966"/>
<path d="M4 44 C3 26 7 4 22.5 3.5 C38 4 42 26 41 44 Z" fill="#1d1411"/>
<path d="M10.5 24 C10.5 13 15.5 8 22.5 8 C29.5 8 34.5 13 34.5 24 C34.5 35 29 42 22.5 42 C16 42 10.5 35 10.5 24 Z" fill="#d19c7c"/>
<path d="M10.5 20 C12 11 17 7.5 23 7.5 C29 7.5 33 10 34.5 17 C30 12 25 11.5 21 12 C16 12.5 13 15 10.5 20Z" fill="#1d1411"/>
<ellipse cx="17" cy="22" rx="2.3" ry="1" fill="#4a2a1e"/><ellipse cx="28" cy="22" rx="2.3" ry="1" fill="#4a2a1e"/>
<path d="M16 30.5 Q22.5 32 29 30.5 Q27.5 36.5 22.5 36.5 Q17.5 36.5 16 30.5Z" fill="#f2e6de"/>
<path d="M16 30.5 Q22.5 38 29 30.5" stroke="#9a5a48" stroke-width="0.9" fill="none"/>
</g></g></svg>
<div class="t" style="left:874.1px;top:451.76px;font-size:16px;line-height:16px;color:#222;font-weight:700;">Jessica Stone</div>
<div class="t" style="left:987px;top:453.03px;font-size:14.5px;line-height:14.5px;color:#888;font-weight:400;">4 minutes ago</div>
<div class="t" style="left:874.1px;top:475.61px;font-size:17px;line-height:17px;color:#333;font-weight:400;">I agree with Nick. I didn't know who I</div>
<div class="t" style="left:874.1px;top:499.61px;font-size:17px;line-height:17px;color:#333;font-weight:400;">was supposed to send finalized tasks</div>
<div class="t" style="left:874.1px;top:523.61px;font-size:17px;line-height:17px;color:#333;font-weight:400;">to.</div>
<svg style="position:absolute;left:817.7px;top:560px;" width="43.5" height="43.5" viewBox="0 0 44 44"> <defs><clipPath id="cj81775600"><rect width="44" height="44" rx="8.09"/></clipPath><filter id="fcj81775600" x="-10%" y="-10%" width="120%" height="120%"><feGaussianBlur stdDeviation="0.35"/></filter></defs>
<g clip-path="url(#cj81775600)"><g filter="url(#fcj81775600)">
<rect width="44" height="44" fill="#1a100c"/>
<rect x="35" y="0" width="9" height="36" fill="#5a3420"/>
<circle cx="38" cy="6" r="3.5" fill="#7a4a2c"/><circle cx="42" cy="15" r="2.5" fill="#6b3f24"/><circle cx="38" cy="22" r="2" fill="#2e1a10"/><circle cx="40" cy="29" r="2" fill="#6a3e24"/><circle cx="36" cy="13" r="1.8" fill="#2a170e"/>
<path d="M0 0 H12 C8 4 4 8 0 16 Z" fill="#4e2c1a"/>
<path d="M9.8 22 C9.8 11 14.5 5.5 21.5 5.5 C28.5 5.5 33 11 33 22 C33 33 28 41 21.5 41 C15 41 9.8 33 9.8 22 Z" fill="#c18769"/>
<ellipse cx="21" cy="26" rx="7" ry="6" fill="#c99072" opacity="0.8"/>
<ellipse cx="16" cy="20.5" rx="2.2" ry="1.1" fill="#3e2016"/><ellipse cx="27" cy="20.5" rx="2.2" ry="1.1" fill="#3e2016"/>
<path d="M21.5 22 L20.5 27 L23 27.5" stroke="#9a6048" stroke-width="0.9" fill="none"/>
<path d="M16.5 31 Q21.5 34.5 26.5 31" stroke="#8a4a38" stroke-width="1.5" fill="none" stroke-linecap="round"/>
<path d="M17 31.5 Q21.5 33.5 26 31.5" stroke="#e0b49a" stroke-width="0.8" fill="none"/>
<rect x="16" y="40" width="11" height="5" fill="#a8705a"/>
<path d="M36 33 L41 29 L44 31 L44 44 L33 44 Z" fill="#c4c4c4"/>
</g></g></svg>
<div class="t" style="left:874.1px;top:561.16px;font-size:16px;line-height:16px;color:#222;font-weight:700;">Jane Withers</div>
<div class="t" style="left:980.5px;top:562.43px;font-size:14.5px;line-height:14.5px;color:#888;font-weight:400;">2 minutes ago</div>
<div class="t" style="left:874.1px;top:584.91px;font-size:17px;line-height:17px;color:#333;font-weight:400;">Okay, thank you for the feedback. I'll</div>
<div class="t" style="left:874.1px;top:609.01px;font-size:17px;line-height:17px;color:#333;font-weight:400;">make sure to map out responsibilities</div>
<div class="t" style="left:874.1px;top:632.71px;font-size:17px;line-height:17px;color:#333;font-weight:400;">better next time. I'll also share it with</div>
<div class="t" style="left:874.1px;top:659.61px;font-size:17px;line-height:17px;color:#333;font-weight:400;letter-spacing:-0.15px">everyone so we're aligned.</div>
<svg style="position:absolute;left:1078px;top:656.4px;" width="22" height="22" viewBox="0 0 22 22">
<defs><radialGradient id="eg2" cx="50%" cy="35%" r="65%"><stop offset="0" stop-color="#ffd84a"/><stop offset="1" stop-color="#f59a1e"/></radialGradient></defs>
<circle cx="11" cy="11" r="10.6" fill="url(#eg2)"/>
<ellipse cx="5" cy="13" rx="2.5" ry="1.6" fill="#f77b5a" opacity="0.6"/><ellipse cx="17" cy="13" rx="2.5" ry="1.6" fill="#f77b5a" opacity="0.6"/>
<path d="M5.5 10 L7.5 7.5 L9.5 10 M12.5 10 L14.5 7.5 L16.5 10" stroke="#6b3b10" stroke-width="1.5" fill="none" stroke-linecap="round" stroke-linejoin="round"/>
<path d="M6.5 14.5 Q11 18.5 15.5 14.5" stroke="#6b3b10" stroke-width="1.4" fill="none" stroke-linecap="round"/>
</svg>
<div style="position:absolute;left:0px;top:0px;width:1px;height:676px;background:#f6f8fb"></div>
<svg style="position:absolute;left:0px;top:675px;" width="20" height="20" viewBox="0 0 20 20"><path d="M0 6 Q1 19 14 20 H0 Z" fill="#0d0606"/></svg>
<svg style="position:absolute;left:1180px;top:675px;" width="20" height="20" viewBox="0 0 20 20"><path d="M20 8 Q19 19 8 20 H20 Z" fill="#8a8a8a"/></svg>
</body></html>
